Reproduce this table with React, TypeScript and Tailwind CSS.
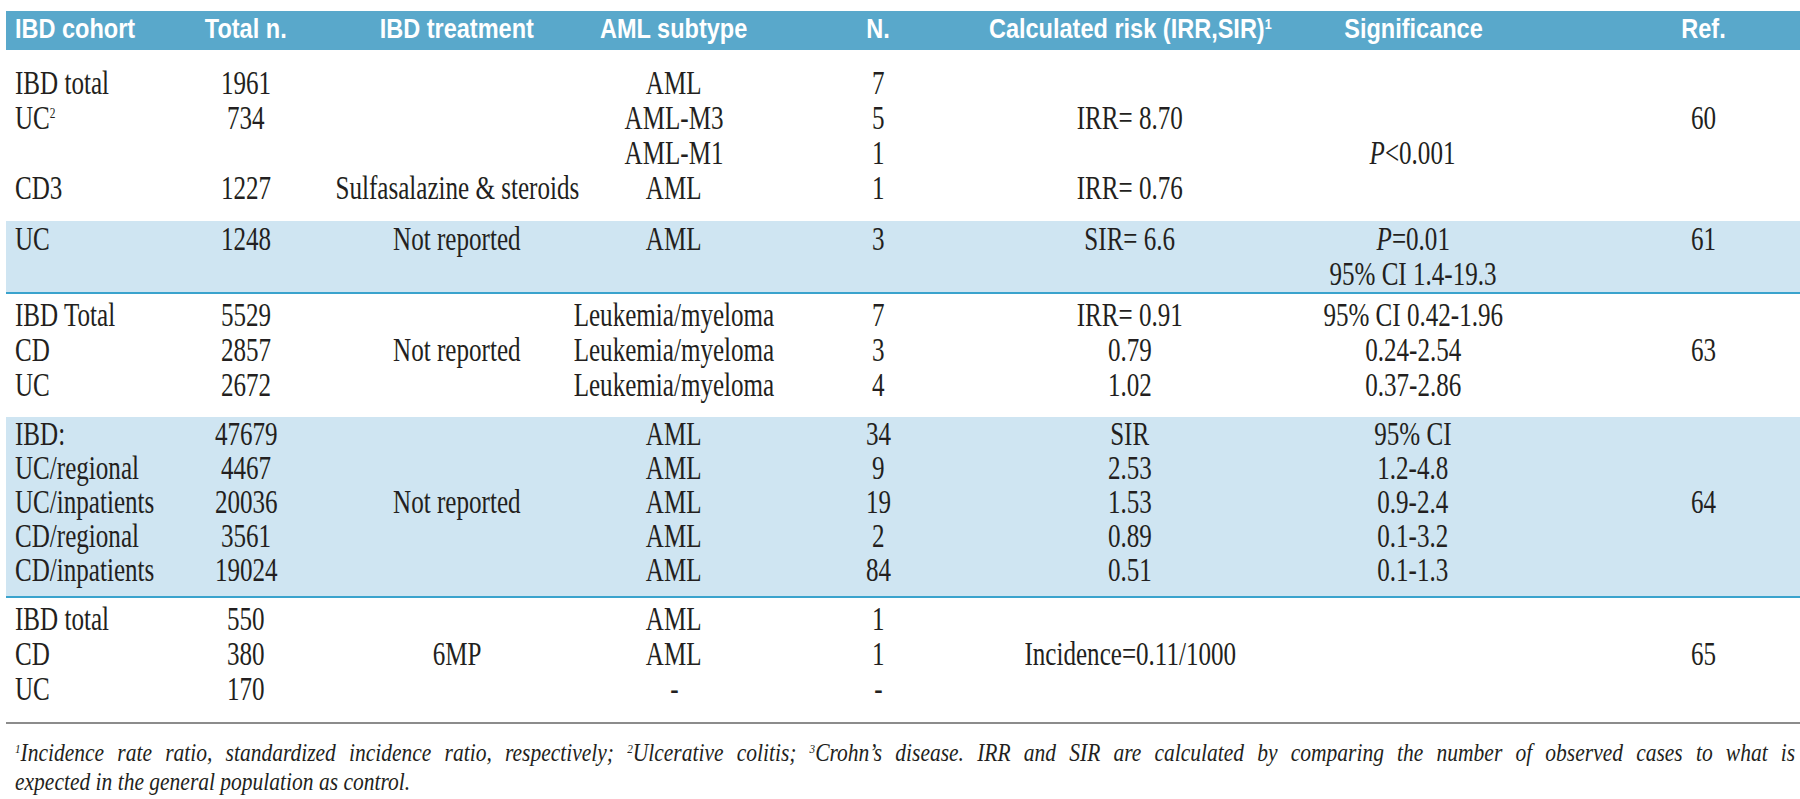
import React from 'react';

type Cell = React.ReactNode;

// column grid: cohort | total | treatment | subtype | N | risk | significance | ref
const COLS = 'grid grid-cols-[154px_172px_250px_184px_224px_280px_286px_244px]';

const Txt = ({ children, left }: { children: React.ReactNode; left?: boolean }) => (
  <span
    className={
      left
        ? 'inline-block whitespace-nowrap scale-x-[0.76] origin-left'
        : 'inline-block whitespace-nowrap scale-x-[0.76] origin-center'
    }
  >
    {children}
  </span>
);

const Line = ({ cells, rowClass }: { cells: Cell[]; rowClass: string }) => (
  <div className={`${COLS} ${rowClass}`}>
    {cells.map((c, i) => (
      <div
        key={i}
        className={
          i === 0
            ? 'flex justify-start pl-[9px]'
            : i === 7
            ? 'flex justify-center pl-[50px]'
            : 'flex justify-center'
        }
      >
        {c !== null && c !== '' ? <Txt left={i === 0}>{c}</Txt> : null}
      </div>
    ))}
  </div>
);

const P = () => <i>P</i>;

const group1: Cell[][] = [
  ['IBD total', '1961', '', 'AML', '7', '', '', ''],
  [
    <>
      UC<span className="relative -top-[11px] text-[15px]">2</span>
    </>,
    '734',
    '',
    'AML-M3',
    '5',
    'IRR= 8.70',
    '',
    '60',
  ],
  ['', '', '', 'AML-M1', '1', '', <><P />&lt;0.001</>, ''],
  ['CD3', '1227', 'Sulfasalazine & steroids', 'AML', '1', 'IRR= 0.76', '', ''],
];

const band1: Cell[][] = [
  ['UC', '1248', 'Not reported', 'AML', '3', 'SIR= 6.6', <><P />=0.01</>, '61'],
  ['', '', '', '', '', '', '95% CI 1.4-19.3', ''],
];

const group2: Cell[][] = [
  ['IBD Total', '5529', '', 'Leukemia/myeloma', '7', 'IRR= 0.91', '95% CI 0.42-1.96', ''],
  ['CD', '2857', 'Not reported', 'Leukemia/myeloma', '3', '0.79', '0.24-2.54', '63'],
  ['UC', '2672', '', 'Leukemia/myeloma', '4', '1.02', '0.37-2.86', ''],
];

const band2: Cell[][] = [
  ['IBD:', '47679', '', 'AML', '34', 'SIR', '95% CI', ''],
  ['UC/regional', '4467', '', 'AML', '9', '2.53', '1.2-4.8', ''],
  ['UC/inpatients', '20036', 'Not reported', 'AML', '19', '1.53', '0.9-2.4', '64'],
  ['CD/regional', '3561', '', 'AML', '2', '0.89', '0.1-3.2', ''],
  ['CD/inpatients', '19024', '', 'AML', '84', '0.51', '0.1-1.3', ''],
];

const group4: Cell[][] = [
  ['IBD total', '550', '', 'AML', '1', '', '', ''],
  ['CD', '380', '6MP', 'AML', '1', 'Incidence=0.11/1000', '', '65'],
  ['UC', '170', '', '-', '-', '', '', ''],
];

const headers = [
  'IBD cohort',
  'Total n.',
  'IBD treatment',
  'AML subtype',
  'N.',
  <>
    Calculated risk (IRR,SIR)<span className="relative -top-[9px] text-[15px]">1</span>
  </>,
  'Significance',
  'Ref.',
];

const Sup = ({ n }: { n: string }) => <span className="relative -top-[8px] text-[13px]">{n}</span>;

export default function App() {
  return (
    <div className="w-[1800px] h-[799px] overflow-hidden bg-white text-[#231f20] pt-[11px]">
      {/* table */}
      <div className="pl-[6px]">
        <div className={`${COLS} h-[39px] bg-[#59a8cb] text-white font-['Liberation_Sans',Arial,sans-serif] font-bold text-[28px] leading-[35px]`}>
          {headers.map((h, i) => (
            <div
              key={i}
              className={
                i === 0
                  ? 'flex justify-start pl-[9px]'
                  : i === 7
                  ? 'flex justify-center pl-[50px]'
                  : 'flex justify-center'
              }
            >
              <span
                className={
                  i === 0
                    ? 'inline-block whitespace-nowrap scale-x-[0.84] origin-left'
                    : 'inline-block whitespace-nowrap scale-x-[0.84] origin-center'
                }
              >
                {h}
              </span>
            </div>
          ))}
        </div>

        <div className="font-['Liberation_Serif','Times_New_Roman',serif] text-[33px]">
          <div className="h-[171px] pt-[16px]">
            {group1.map((r, i) => (
              <Line key={i} cells={r} rowClass="h-[35px] leading-[35px]" />
            ))}
          </div>
          <div className="h-[73px] pt-[1px] bg-[#cfe5f2] border-b-2 border-[#3aa3cd]">
            {band1.map((r, i) => (
              <Line key={i} cells={r} rowClass="h-[35px] leading-[35px]" />
            ))}
          </div>
          <div className="h-[123px] pt-[4px]">
            {group2.map((r, i) => (
              <Line key={i} cells={r} rowClass="h-[35px] leading-[35px]" />
            ))}
          </div>
          <div className="h-[181px] bg-[#cfe5f2] border-b-2 border-[#3aa3cd]">
            {band2.map((r, i) => (
              <Line key={i} cells={r} rowClass="h-[34px] leading-[34px]" />
            ))}
          </div>
          <div className="h-[126px] pt-[4px] border-b-2 border-[#8c8c8c]">
            {group4.map((r, i) => (
              <Line key={i} cells={r} rowClass="h-[35px] leading-[35px]" />
            ))}
          </div>
        </div>
      </div>

      {/* footnote, first line justified to the full width */}
      <div className="mt-[14px] pl-[15px] font-['Liberation_Serif','Times_New_Roman',serif] italic text-[25px] leading-[29px]">
        <div className="whitespace-nowrap h-[29px]">
          <span className="inline-block w-[2070px] text-justify [text-align-last:justify] scale-x-[0.86] origin-left">
            <Sup n="1" />Incidence rate ratio, standardized incidence ratio, respectively; <Sup n="2" />Ulcerative colitis;{' '}
            <Sup n="3" />Crohn’s disease. IRR and SIR are calculated by comparing the number of observed cases to what is
          </span>
        </div>
        <div className="whitespace-nowrap h-[29px]">
          <span className="inline-block scale-x-[0.86] origin-left">
            expected in the general population as control.
          </span>
        </div>
      </div>
    </div>
  );
}
